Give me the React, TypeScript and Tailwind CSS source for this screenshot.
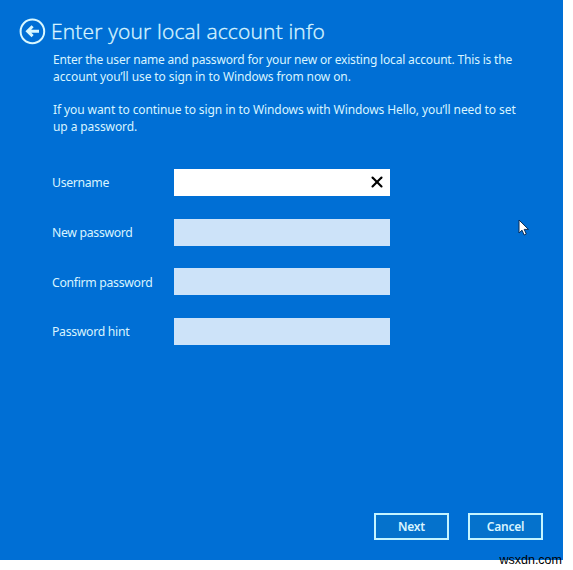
import { X } from 'lucide-react';

const fields = [
  { id: 'username', label: 'Username', active: true },
  { id: 'new-password', label: 'New password', active: false },
  { id: 'confirm-password', label: 'Confirm password', active: false },
  { id: 'password-hint', label: 'Password hint', active: false },
];

function BackButton() {
  return (
    <button type="button" aria-label="Back" className="mt-[18px] h-[27px] w-[27px] shrink-0">
      <svg viewBox="0 0 27 27" className="h-[27px] w-[27px]" fill="none" stroke="#d8f8ff">
        <circle cx="13.4" cy="13.4" r="11.8" strokeWidth="2" />
        <path d="M8.5 13.2H20M13.6 8.3L8.6 13.2l5 4.9" strokeWidth="3" />
      </svg>
    </button>
  );
}

function Field({ id, label, active }: { id: string; label: string; active: boolean }) {
  return (
    <div className="flex h-[27px] items-center">
      <label htmlFor={id} className="w-[122px] shrink-0 whitespace-nowrap pt-[2px] text-[12.25px] tracking-[-0.31px]">
        {label}
      </label>
      <div className={`flex h-[27px] w-[216px] items-center ${active ? 'bg-white' : 'bg-[#cde3f9]'}`}>
        <input id={id} className="h-full min-w-0 flex-1 bg-transparent px-2 text-black outline-none" />
        {active && <X className="mb-px mr-[4px] h-[18px] w-[18px] text-black" strokeWidth={2.8} />}
      </div>
    </div>
  );
}

export default function App() {
  return (
    <div className="relative h-[570px] w-[573px] overflow-hidden bg-white font-['Noto_Sans','Open_Sans',sans-serif]">
      <main className="flex h-[560px] w-[563px] flex-col bg-[#006fd5] text-[#d8f4ff]">
        <header className="flex pl-[19px]">
          <BackButton />
          <h1 className="ml-[5px] mt-[16px] whitespace-nowrap font-['Open_Sans',sans-serif] text-[21px] font-light leading-[30px] tracking-[0.17px] [-webkit-text-stroke:0.35px_#d8f4ff]">
            Enter your local account info
          </h1>
        </header>

        <div className="mt-[6px] whitespace-nowrap pl-[53px] text-[12px] leading-[16.5px] tracking-[-0.09px]">
          <p>
            <span className="tracking-[-0.18px]">
              Enter the user name and password for your new or existing local account. This is the
            </span>
            <br />
            account you’ll use to sign in to Windows from now on.
          </p>
          <p className="mt-[17px]">
            If you want to continue to sign in to Windows with Windows Hello, you’ll need to set
            <br />
            up a password.
          </p>
        </div>

        <form className="mt-[34px] flex flex-col gap-[22.6px] pl-[52px]">
          {fields.map((field) => (
            <Field key={field.id} {...field} />
          ))}
        </form>

        <footer className="mb-[20px] mr-[20px] mt-auto flex justify-end gap-[19px] text-[12px] font-semibold tracking-[-0.2px]">
          <button type="button" className="h-[27px] w-[75px] border-2 border-[#c4f4ff] bg-[#0572cc] pt-px leading-none">
            Next
          </button>
          <button type="button" className="h-[27px] w-[75px] border-2 border-[#c4f4ff] bg-[#0572cc] pt-px leading-none">
            Cancel
          </button>
        </footer>
      </main>

      {/* mouse pointer */}
      <svg viewBox="0 0 12 18" className="absolute left-[518px] top-[219px] h-[18px] w-[12px]">
        <path
          d="M1 1v13l3-2.8 2.1 4.8 2.2-1-2.1-4.6h4.3z"
          fill="#fff"
          stroke="#0b2c55"
          strokeWidth="1"
        />
      </svg>

      <span className="absolute right-[11px] top-[553px] font-['Liberation_Sans',sans-serif] text-[12.5px] leading-[14px] text-black">
        wsxdn.com
      </span>
    </div>
  );
}
